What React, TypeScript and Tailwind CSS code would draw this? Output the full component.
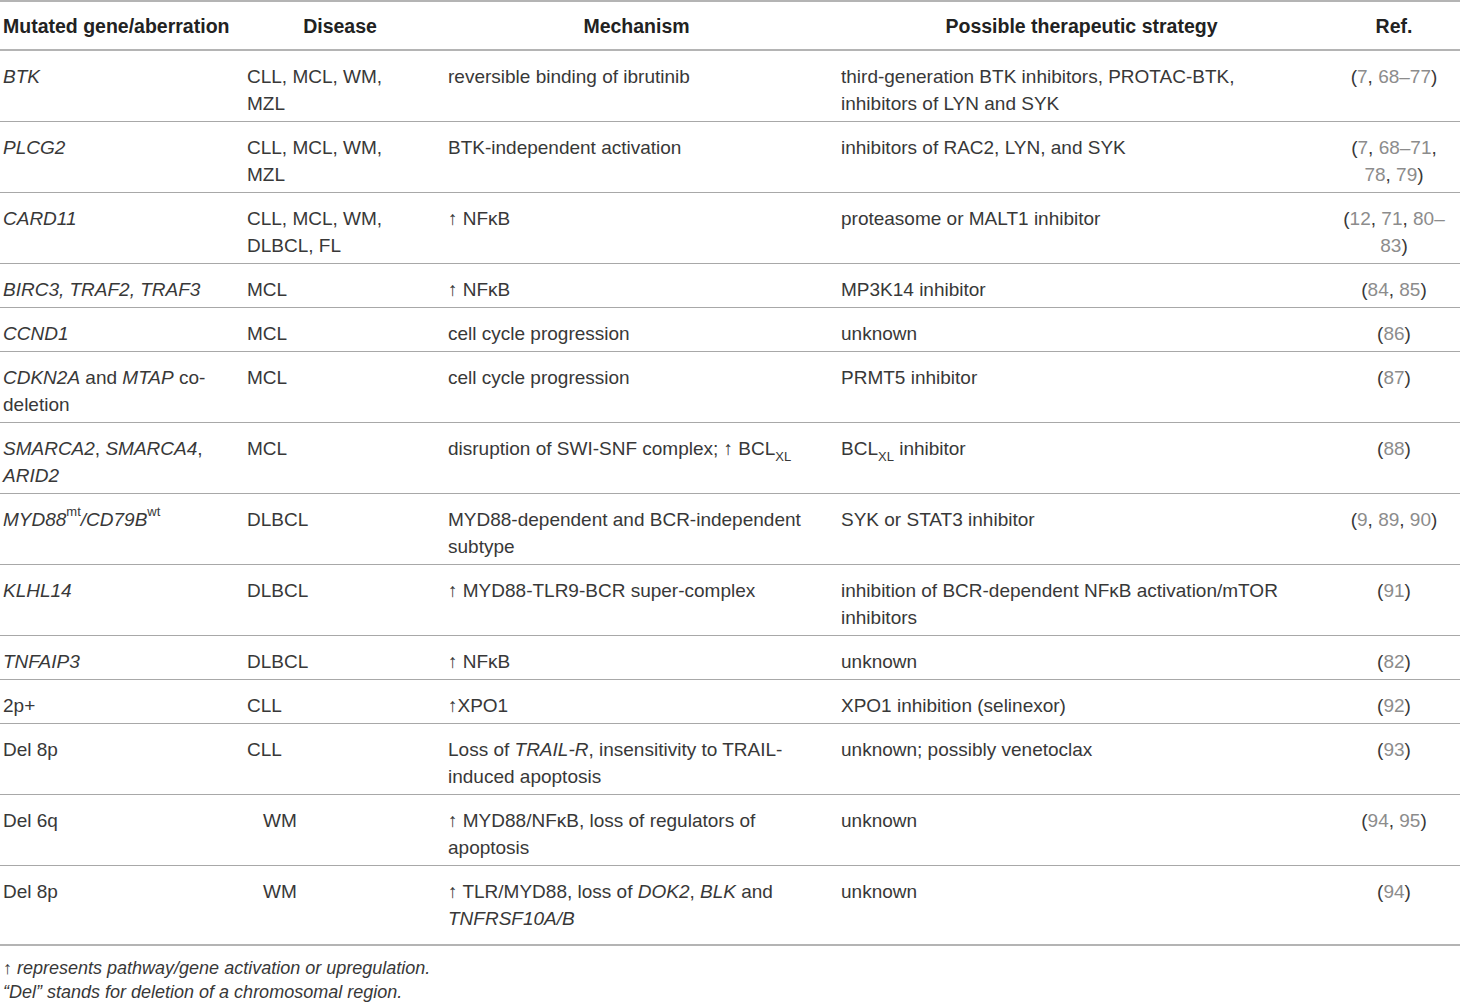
import React from "react";

type Row = {
  gene: React.ReactNode;
  disease: React.ReactNode;
  diseaseIndent?: boolean;
  mech: React.ReactNode;
  strat: React.ReactNode;
  refs: React.ReactNode;
  last?: boolean;
};

const N = ({ children }: { children: React.ReactNode }) => (
  <span className="text-[#8c8c8c]">{children}</span>
);

const I = ({ children }: { children: React.ReactNode }) => <i>{children}</i>;

const up = "\u2191";

const rows: Row[] = [
  {
    gene: <I>BTK</I>,
    disease: (
      <>
        CLL, MCL, WM,
        <br />
        MZL
      </>
    ),
    mech: "reversible binding of ibrutinib",
    strat: (
      <>
        third-generation BTK inhibitors, PROTAC-BTK,
        <br />
        inhibitors of LYN and SYK
      </>
    ),
    refs: (
      <>
        (<N>7</N>, <N>68–77</N>)
      </>
    ),
  },
  {
    gene: <I>PLCG2</I>,
    disease: (
      <>
        CLL, MCL, WM,
        <br />
        MZL
      </>
    ),
    mech: "BTK-independent activation",
    strat: "inhibitors of RAC2, LYN, and SYK",
    refs: (
      <>
        (<N>7</N>, <N>68–71</N>,
        <br />
        <N>78</N>, <N>79</N>)
      </>
    ),
  },
  {
    gene: <I>CARD11</I>,
    disease: (
      <>
        CLL, MCL, WM,
        <br />
        DLBCL, FL
      </>
    ),
    mech: <>{up} NFκB</>,
    strat: "proteasome or MALT1 inhibitor",
    refs: (
      <>
        (<N>12</N>, <N>71</N>, <N>80–</N>
        <br />
        <N>83</N>)
      </>
    ),
  },
  {
    gene: <I>BIRC3, TRAF2, TRAF3</I>,
    disease: "MCL",
    mech: <>{up} NFκB</>,
    strat: "MP3K14 inhibitor",
    refs: (
      <>
        (<N>84</N>, <N>85</N>)
      </>
    ),
  },
  {
    gene: <I>CCND1</I>,
    disease: "MCL",
    mech: "cell cycle progression",
    strat: "unknown",
    refs: (
      <>
        (<N>86</N>)
      </>
    ),
  },
  {
    gene: (
      <>
        <I>CDKN2A</I> and <I>MTAP</I> co-
        <br />
        deletion
      </>
    ),
    disease: "MCL",
    mech: "cell cycle progression",
    strat: "PRMT5 inhibitor",
    refs: (
      <>
        (<N>87</N>)
      </>
    ),
  },
  {
    gene: (
      <>
        <I>SMARCA2</I>, <I>SMARCA4</I>,
        <br />
        <I>ARID2</I>
      </>
    ),
    disease: "MCL",
    mech: (
      <>
        disruption of SWI-SNF complex; {up} BCL
        <sub className="text-[13px] align-[-3px]">XL</sub>
      </>
    ),
    strat: (
      <>
        BCL<sub className="text-[13px] align-[-3px]">XL</sub> inhibitor
      </>
    ),
    refs: (
      <>
        (<N>88</N>)
      </>
    ),
  },
  {
    gene: (
      <>
        <I>MYD88</I>
        <sup className="text-[13px] align-[4px] not-italic">mt</sup>
        <I>/CD79B</I>
        <sup className="text-[13px] align-[4px] not-italic">wt</sup>
      </>
    ),
    disease: "DLBCL",
    mech: (
      <>
        MYD88-dependent and BCR-independent
        <br />
        subtype
      </>
    ),
    strat: "SYK or STAT3 inhibitor",
    refs: (
      <>
        (<N>9</N>, <N>89</N>, <N>90</N>)
      </>
    ),
  },
  {
    gene: <I>KLHL14</I>,
    disease: "DLBCL",
    mech: <>{up} MYD88-TLR9-BCR super-complex</>,
    strat: (
      <>
        inhibition of BCR-dependent NFκB activation/mTOR
        <br />
        inhibitors
      </>
    ),
    refs: (
      <>
        (<N>91</N>)
      </>
    ),
  },
  {
    gene: <I>TNFAIP3</I>,
    disease: "DLBCL",
    mech: <>{up} NFκB</>,
    strat: "unknown",
    refs: (
      <>
        (<N>82</N>)
      </>
    ),
  },
  {
    gene: "2p+",
    disease: "CLL",
    mech: <>{up}XPO1</>,
    strat: "XPO1 inhibition (selinexor)",
    refs: (
      <>
        (<N>92</N>)
      </>
    ),
  },
  {
    gene: "Del 8p",
    disease: "CLL",
    mech: (
      <>
        Loss of <I>TRAIL-R</I>, insensitivity to TRAIL-
        <br />
        induced apoptosis
      </>
    ),
    strat: "unknown; possibly venetoclax",
    refs: (
      <>
        (<N>93</N>)
      </>
    ),
  },
  {
    gene: "Del 6q",
    disease: "WM",
    diseaseIndent: true,
    mech: (
      <>
        {up} MYD88/NFκB, loss of regulators of
        <br />
        apoptosis
      </>
    ),
    strat: "unknown",
    refs: (
      <>
        (<N>94</N>, <N>95</N>)
      </>
    ),
  },
  {
    gene: "Del 8p",
    disease: "WM",
    diseaseIndent: true,
    mech: (
      <>
        {up} TLR/MYD88, loss of <I>DOK2</I>, <I>BLK</I> and
        <br />
        <I>TNFRSF10A/B</I>
      </>
    ),
    strat: "unknown",
    refs: (
      <>
        (<N>94</N>)
      </>
    ),
    last: true,
  },
];

export default function App() {
  return (
    <div
      className="w-[1460px] bg-white text-[#383838] text-[19px] leading-[27px]"
      style={{ fontFamily: '"Liberation Sans", Arial, sans-serif' }}
    >
      <table className="w-[1460px] table-fixed border-collapse">
        <colgroup>
          <col className="w-[240px]" />
          <col className="w-[200px]" />
          <col className="w-[393px]" />
          <col className="w-[497px]" />
          <col className="w-[130px]" />
        </colgroup>
        <thead>
          <tr className="border-t-2 border-b-2 border-[#b4b4b4] text-[19.5px] text-[#222]">
            <th className="pl-[3px] pt-[11px] pb-[9px] text-left font-bold whitespace-nowrap">
              Mutated gene/aberration
            </th>
            <th className="pt-[11px] pb-[9px] text-center font-bold">Disease</th>
            <th className="pt-[11px] pb-[9px] text-center font-bold">Mechanism</th>
            <th className="pt-[11px] pb-[9px] text-center font-bold">
              Possible therapeutic strategy
            </th>
            <th className="pt-[11px] pb-[9px] pr-[2px] text-center font-bold">Ref.</th>
          </tr>
        </thead>
        <tbody>
          {rows.map((r, i) => (
            <tr
              key={i}
              className={
                r.last
                  ? "border-b-2 border-[#b4b4b4] align-top"
                  : "border-b border-[#a8a8a8] align-top"
              }
            >
              <td
                className={`pl-[3px] pt-[12px] whitespace-nowrap ${
                  r.last ? "pb-[12px]" : "pb-[4px]"
                }`}
              >
                {r.gene}
              </td>
              <td
                className={`pt-[12px] whitespace-nowrap ${
                  r.diseaseIndent ? "pl-[23px]" : "pl-[7px]"
                } ${r.last ? "pb-[12px]" : "pb-[4px]"}`}
              >
                {r.disease}
              </td>
              <td
                className={`pl-[8px] pt-[12px] whitespace-nowrap ${
                  r.last ? "pb-[12px]" : "pb-[4px]"
                }`}
              >
                {r.mech}
              </td>
              <td
                className={`pl-[8px] pt-[12px] whitespace-nowrap ${
                  r.last ? "pb-[12px]" : "pb-[4px]"
                }`}
              >
                {r.strat}
              </td>
              <td
                className={`pt-[12px] pr-[2px] text-center whitespace-nowrap ${
                  r.last ? "pb-[12px]" : "pb-[4px]"
                }`}
              >
                {r.refs}
              </td>
            </tr>
          ))}
        </tbody>
      </table>
      <div className="pl-[3px] pt-[10px] leading-[24px] text-[18px] italic">
        <p>
          <span className="not-italic">{up}</span> represents pathway/gene activation or
          upregulation.
        </p>
        <p>“Del” stands for deletion of a chromosomal region.</p>
      </div>
    </div>
  );
}
